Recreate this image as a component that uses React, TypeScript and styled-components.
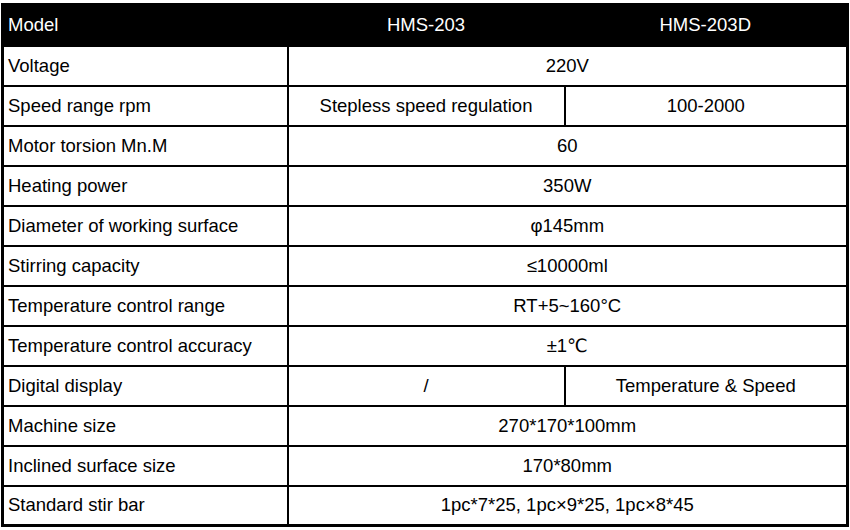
import React from 'react';
import styled, { createGlobalStyle } from 'styled-components';

const GlobalStyle = createGlobalStyle`
  html, body {
    margin: 0;
    padding: 0;
    background: #ffffff;
  }
  body {
    font-family: "Liberation Sans", Arial, "DejaVu Sans", "Noto Sans CJK SC", sans-serif;
  }
`;

const Page = styled.div`
  padding: 3px 4px 0 1px;
`;

const Table = styled.table`
  width: 845px;
  border-collapse: collapse;
  table-layout: fixed;
  border: 3px solid #000;
  font-size: 18.5px;
  color: #000;
`;

const HeadRow = styled.tr`
  background: #000;
  color: #fff;
  height: 41px;
`;

const HeadCell = styled.th<{ $left?: boolean }>`
  font-weight: normal;
  text-align: ${(p) => (p.$left ? 'left' : 'center')};
  padding: 0 4px;
  border: none;
`;

const Row = styled.tr`
  height: 40px;
`;

const Cell = styled.td<{ $left?: boolean }>`
  border: 2px solid #000;
  padding: 0 4px;
  text-align: ${(p) => (p.$left ? 'left' : 'center')};
  white-space: nowrap;
`;

type Spec = {
  label: string;
  values: string[];
};

const specs: Spec[] = [
  { label: 'Voltage', values: ['220V'] },
  { label: 'Speed range rpm', values: ['Stepless speed regulation', '100-2000'] },
  { label: 'Motor torsion Mn.M', values: ['60'] },
  { label: 'Heating power', values: ['350W'] },
  { label: 'Diameter of working surface', values: ['φ145mm'] },
  { label: 'Stirring capacity', values: ['≤10000ml'] },
  { label: 'Temperature control range', values: ['RT+5~160°C'] },
  { label: 'Temperature control accuracy', values: ['±1℃'] },
  { label: 'Digital display', values: ['/', 'Temperature & Speed'] },
  { label: 'Machine size', values: ['270*170*100mm'] },
  { label: 'Inclined surface size', values: ['170*80mm'] },
  { label: 'Standard stir bar', values: ['1pc*7*25, 1pc×9*25, 1pc×8*45'] },
];

const App = () => (
  <>
    <GlobalStyle />
    <Page>
      <Table>
        <colgroup>
          <col style={{ width: 285 }} />
          <col style={{ width: 277 }} />
          <col style={{ width: 283 }} />
        </colgroup>
        <thead>
          <HeadRow>
            <HeadCell $left>Model</HeadCell>
            <HeadCell>HMS-203</HeadCell>
            <HeadCell>HMS-203D</HeadCell>
          </HeadRow>
        </thead>
        <tbody>
          {specs.map((s) => (
            <Row key={s.label}>
              <Cell $left>{s.label}</Cell>
              {s.values.length === 1 ? (
                <Cell colSpan={2}>{s.values[0]}</Cell>
              ) : (
                s.values.map((v) => <Cell key={v}>{v}</Cell>)
              )}
            </Row>
          ))}
        </tbody>
      </Table>
    </Page>
  </>
);

export default App;
